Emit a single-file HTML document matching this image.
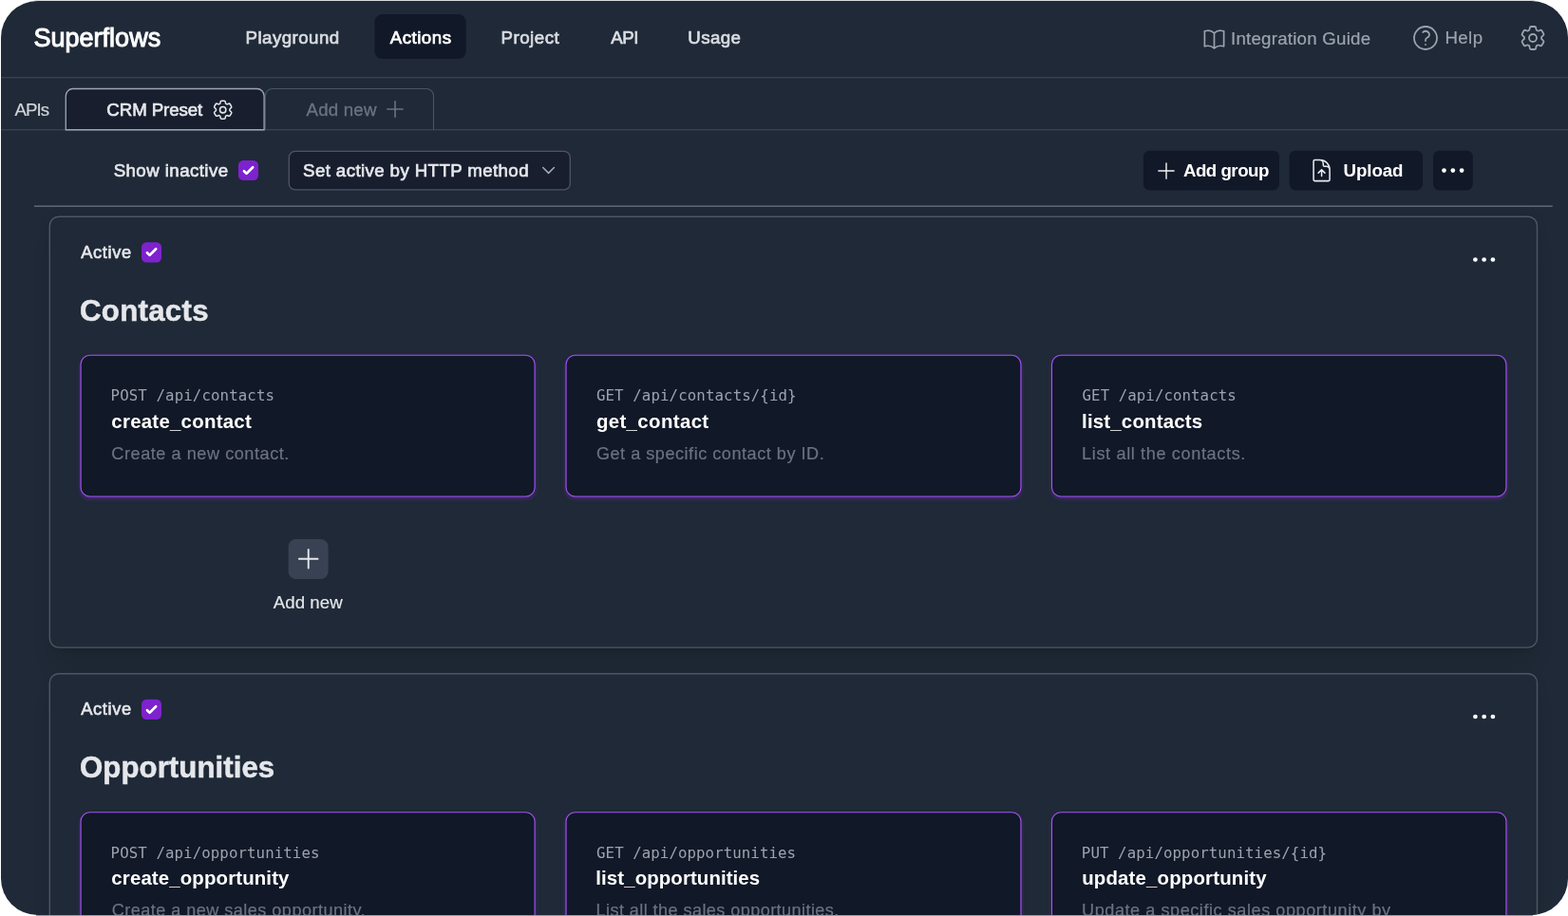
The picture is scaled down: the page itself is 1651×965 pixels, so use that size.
<!DOCTYPE html>
<html lang="en">
<head>
<meta charset="utf-8">
<title>Superflows - Actions</title>
<style>
html,body{margin:0;padding:0;background:#ffffff;}
body{width:1651px;height:965px;overflow:hidden;position:relative;font-family:"Liberation Sans",sans-serif;}
#frame{position:absolute;left:1px;top:1px;width:1650px;height:962.8px;border-radius:38.5px;overflow:hidden;background:#1f2937;}
#page{position:absolute;left:-1px;top:-1px;width:1651px;height:965px;will-change:transform;}
.t{position:absolute;white-space:nowrap;line-height:1;font-family:"Liberation Sans",sans-serif;}
.b{position:absolute;box-sizing:border-box;}
svg{position:absolute;overflow:visible;}
.gsh{position:absolute;border-radius:9.5px;background:#1f2937;box-shadow:0 20px 25px -5px rgba(0,0,0,0.11),0 8px 10px -6px rgba(0,0,0,0.11),0 0 14px rgba(0,0,0,0.07);}
.glow{position:absolute;border-radius:9.5px;box-shadow:0 2.5px 5px -0.5px rgba(147,51,234,0.42),0 0 2px rgba(147,51,234,0.25);}
</style>
</head>
<body>
<div style="position:absolute;left:36px;top:0;width:1580px;height:1px;background:#d9dadd"></div>
<div style="position:absolute;left:38px;top:964px;width:1576px;height:1px;background:#9b9ea6"></div>
<div id="frame"><div id="page">
<div class="gsh" style="left:52.3px;top:228.3px;width:1566.2px;height:453.8px;"></div>
<div class="gsh" style="left:52.3px;top:709.8px;width:1566.2px;height:420px;"></div>
<div class="glow" style="left:85.10px;top:374.3px;width:478.0px;height:148.65px;"></div>
<div class="glow" style="left:596.05px;top:374.3px;width:478.9px;height:148.65px;"></div>
<div class="glow" style="left:1107.50px;top:374.3px;width:478.4px;height:148.65px;"></div>
<div class="glow" style="left:85.10px;top:855.8px;width:478.0px;height:148.65px;"></div>
<div class="glow" style="left:596.05px;top:855.8px;width:478.9px;height:148.65px;"></div>
<div class="glow" style="left:1107.50px;top:855.8px;width:478.4px;height:148.65px;"></div>
<svg style="left:0;top:0" width="1651" height="965" viewBox="0 0 1651 965"><rect x="0" y="81" width="1651" height="1" fill="#364051"/><rect x="0" y="82" width="1651" height="1" fill="#273141"/><rect x="394.5" y="15.1" width="96.2" height="47" rx="8" fill="#111827"/><rect x="0" y="136.250" width="1651" height="1" fill="#424c5c"/><path d="M279.400 136.700V101a7.500 7.500 0 0 1 7.500-7.500h162.100a7.500 7.500 0 0 1 7.500 7.500v35.700" fill="none" stroke="#4b5563" stroke-width="1.1"/><path d="M69.300 136.750V101a7.500 7.500 0 0 1 7.500-7.500h193.800a7.500 7.500 0 0 1 7.500 7.500v35.750Z" fill="#181e2e" stroke="#9ea6b4" stroke-width="1.3"/><rect x="250.900" y="168.900" width="21.100" height="21.100" rx="5.200" fill="#7e22ce"/><rect x="304.300" y="159.300" width="296" height="40.600" rx="6.500" fill="#181e2e" stroke="#4b5563" stroke-width="1.350"/><path d="M571.700 176.500l5.850 5.900 5.850-5.900" fill="none" stroke="#a3abb8" stroke-width="1.500" stroke-linecap="round" stroke-linejoin="round"/><rect x="1204" y="158.700" width="143" height="41.800" rx="6.500" fill="#111827"/><rect x="1357.600" y="158.700" width="140.400" height="41.800" rx="6.500" fill="#111827"/><rect x="1509" y="158.700" width="41.800" height="41.800" rx="6.500" fill="#111827"/><circle cx="1520.5" cy="179.600" r="2.350" fill="#ffffff"/><circle cx="1529.8" cy="179.600" r="2.350" fill="#ffffff"/><circle cx="1539.1" cy="179.600" r="2.350" fill="#ffffff"/><rect x="36" y="216.550" width="1598.800" height="1.300" fill="#6b7280"/><rect x="52.300" y="228.300" width="1566.200" height="453.8" rx="9.500" fill="none" stroke="#4d5766" stroke-width="1.400"/><rect x="149" y="255.300" width="21.100" height="21.100" rx="5.200" fill="#7e22ce"/><circle cx="1553.4" cy="273.500" r="2.350" fill="#ffffff"/><circle cx="1562.65" cy="273.500" r="2.350" fill="#ffffff"/><circle cx="1571.9" cy="273.500" r="2.350" fill="#ffffff"/><rect x="85.100" y="374.300" width="478.0" height="148.65" rx="9.500" fill="#111827" stroke="#a453f3" stroke-width="1.120"/><rect x="596.050" y="374.300" width="478.9" height="148.65" rx="9.500" fill="#111827" stroke="#a453f3" stroke-width="1.120"/><rect x="1107.500" y="374.300" width="478.4" height="148.65" rx="9.500" fill="#111827" stroke="#a453f3" stroke-width="1.120"/><rect x="52.300" y="709.800" width="1566.200" height="420" rx="9.500" fill="none" stroke="#4d5766" stroke-width="1.400"/><rect x="149" y="736.800" width="21.100" height="21.100" rx="5.200" fill="#7e22ce"/><circle cx="1553.4" cy="755.000" r="2.350" fill="#ffffff"/><circle cx="1562.65" cy="755.000" r="2.350" fill="#ffffff"/><circle cx="1571.9" cy="755.000" r="2.350" fill="#ffffff"/><rect x="85.100" y="855.800" width="478.0" height="148.65" rx="9.500" fill="#111827" stroke="#a453f3" stroke-width="1.120"/><rect x="596.050" y="855.800" width="478.9" height="148.65" rx="9.500" fill="#111827" stroke="#a453f3" stroke-width="1.120"/><rect x="1107.500" y="855.800" width="478.4" height="148.65" rx="9.500" fill="#111827" stroke="#a453f3" stroke-width="1.120"/><rect x="303.600" y="567.900" width="42" height="42.200" rx="8" fill="#384253"/></svg>
<svg style="left:1264.70px;top:27.50px" width="27" height="27" viewBox="0 0 24 24" fill="none" stroke="#9ca3af" stroke-width="1.5" stroke-linecap="round" stroke-linejoin="round"><path d="M12 6.042A8.967 8.967 0 0 0 6 3.750c-1.052 0-2.062.18-3 .512v14.250A8.987 8.987 0 0 1 6 18c2.305 0 4.408.867 6 2.292m0-14.250a8.966 8.966 0 0 1 6-2.292c1.052 0 2.062.18 3 .512v14.250A8.987 8.987 0 0 0 18 18a8.967 8.967 0 0 0-6 2.292m0-14.250v14.250"/></svg>
<svg style="left:1484.90px;top:23.60px" width="32" height="32" viewBox="0 0 24 24" fill="none" stroke="#9ca3af" stroke-width="1.32" stroke-linecap="round" stroke-linejoin="round"><path d="M9.879 7.519c1.171-1.025 3.071-1.025 4.242 0 1.172 1.025 1.172 2.687 0 3.712-.203.179-.430.326-.670.442-.745.361-1.450.999-1.450 1.827v.750M21 12a9 9 0 1 1-18 0 9 9 0 0 1 18 0Zm-9 5.250h.008v.008H12v-.008Z"/></svg>
<svg style="left:1597.90px;top:23.70px" width="32" height="32" viewBox="0 0 24 24" fill="none" stroke="#9ca3af" stroke-width="1.32" stroke-linecap="round" stroke-linejoin="round"><path d="M9.594 3.940c.09-.542.560-.940 1.110-.940h2.593c.55 0 1.020.398 1.110.940l.213 1.281c.063.374.313.686.645.870.074.040.147.083.220.127.325.196.720.257 1.075.124l1.217-.456a1.125 1.125 0 0 1 1.370.490l1.296 2.247a1.125 1.125 0 0 1-.260 1.431l-1.003.827c-.293.241-.438.613-.430.992a7.723 7.723 0 0 1 0 .255c-.008.378.137.750.430.991l1.004.827c.424.350.534.955.260 1.430l-1.298 2.247a1.125 1.125 0 0 1-1.369.491l-1.217-.456c-.355-.133-.750-.072-1.076.124a6.470 6.470 0 0 1-.220.128c-.331.183-.581.495-.644.869l-.213 1.281c-.09.543-.560.940-1.110.940h-2.594c-.55 0-1.019-.398-1.110-.940l-.213-1.281c-.062-.374-.312-.686-.644-.870a6.520 6.520 0 0 1-.220-.127c-.325-.196-.720-.257-1.076-.124l-1.217.456a1.125 1.125 0 0 1-1.369-.490l-1.297-2.247a1.125 1.125 0 0 1 .260-1.431l1.004-.827c.292-.240.437-.613.430-.991a6.932 6.932 0 0 1 0-.255c.007-.380-.138-.751-.430-.992l-1.004-.827a1.125 1.125 0 0 1-.260-1.430l1.297-2.247a1.125 1.125 0 0 1 1.370-.491l1.216.456c.356.133.751.072 1.076-.124.072-.044.146-.086.220-.128.332-.183.582-.495.644-.869l.214-1.280Z"/><path d="M15 12a3 3 0 1 1-6 0 3 3 0 0 1 6 0Z"/></svg>
<svg style="left:222.40px;top:102.50px" width="25.4" height="25.4" viewBox="0 0 24 24" fill="none" stroke="#e5e7eb" stroke-width="1.45" stroke-linecap="round" stroke-linejoin="round"><path d="M9.594 3.940c.09-.542.560-.940 1.110-.940h2.593c.55 0 1.020.398 1.110.940l.213 1.281c.063.374.313.686.645.870.074.040.147.083.220.127.325.196.720.257 1.075.124l1.217-.456a1.125 1.125 0 0 1 1.370.490l1.296 2.247a1.125 1.125 0 0 1-.260 1.431l-1.003.827c-.293.241-.438.613-.430.992a7.723 7.723 0 0 1 0 .255c-.008.378.137.750.430.991l1.004.827c.424.350.534.955.260 1.430l-1.298 2.247a1.125 1.125 0 0 1-1.369.491l-1.217-.456c-.355-.133-.750-.072-1.076.124a6.470 6.470 0 0 1-.220.128c-.331.183-.581.495-.644.869l-.213 1.281c-.09.543-.560.940-1.110.940h-2.594c-.55 0-1.019-.398-1.110-.940l-.213-1.281c-.062-.374-.312-.686-.644-.870a6.520 6.520 0 0 1-.220-.127c-.325-.196-.720-.257-1.076-.124l-1.217.456a1.125 1.125 0 0 1-1.369-.490l-1.297-2.247a1.125 1.125 0 0 1 .260-1.431l1.004-.827c.292-.240.437-.613.430-.991a6.932 6.932 0 0 1 0-.255c.007-.380-.138-.751-.430-.992l-1.004-.827a1.125 1.125 0 0 1-.260-1.430l1.297-2.247a1.125 1.125 0 0 1 1.370-.491l1.216.456c.356.133.751.072 1.076-.124.072-.044.146-.086.220-.128.332-.183.582-.495.644-.869l.214-1.280Z"/><path d="M15 12a3 3 0 1 1-6 0 3 3 0 0 1 6 0Z"/></svg>
<svg style="left:403.00px;top:102.10px" width="26" height="26" viewBox="0 0 24 24" fill="none" stroke="#6b7280" stroke-width="1.5" stroke-linecap="round" ><path d="M12 4.500v15m7.500-7.500h-15"/></svg>
<svg style="left:1214.50px;top:166.75px" width="26" height="26" viewBox="0 0 24 24" fill="none" stroke="#f3f4f6" stroke-width="1.3" stroke-linecap="round" ><path d="M12 4.500v15m7.500-7.500h-15"/></svg>
<svg style="left:1378.10px;top:165.90px" width="27.2" height="27.2" viewBox="0 0 24 24" fill="none" stroke="#e9ebef" stroke-width="1.35" stroke-linecap="round" stroke-linejoin="round"><path d="M19.500 14.250v-2.625a3.375 3.375 0 0 0-3.375-3.375h-1.500A1.125 1.125 0 0 1 13.500 7.125v-1.500a3.375 3.375 0 0 0-3.375-3.375H8.250m6.750 12-3-3m0 0-3 3m3-3v6m-1.500-15H5.625c-.621 0-1.125.504-1.125 1.125v17.250c0 .621.504 1.125 1.125 1.125h12.750c.621 0 1.125-.504 1.125-1.125V11.250a9 9 0 0 0-9-9Z"/></svg>
<svg style="left:308.75px;top:573.25px" width="31.5" height="31.5" viewBox="0 0 24 24" fill="none" stroke="#e5e7eb" stroke-width="1.45" stroke-linecap="round" ><path d="M12 4.500v15m7.500-7.500h-15"/></svg>
<svg style="left:250.9px;top:168.9px" width="21.1" height="21.1" viewBox="0 0 16 16" fill="#fff"><path d="M12.207 4.793a1 1 0 0 1 0 1.414l-5 5a1 1 0 0 1-1.414 0l-2-2a1 1 0 0 1 1.414-1.414L6.500 9.086l4.293-4.293a1 1 0 0 1 1.414 0z"/></svg>
<svg style="left:149px;top:255.3px" width="21.1" height="21.1" viewBox="0 0 16 16" fill="#fff"><path d="M12.207 4.793a1 1 0 0 1 0 1.414l-5 5a1 1 0 0 1-1.414 0l-2-2a1 1 0 0 1 1.414-1.414L6.500 9.086l4.293-4.293a1 1 0 0 1 1.414 0z"/></svg>
<svg style="left:149px;top:736.8px" width="21.1" height="21.1" viewBox="0 0 16 16" fill="#fff"><path d="M12.207 4.793a1 1 0 0 1 0 1.414l-5 5a1 1 0 0 1-1.414 0l-2-2a1 1 0 0 1 1.414-1.414L6.500 9.086l4.293-4.293a1 1 0 0 1 1.414 0z"/></svg>

<div class="t" style='left:35.49px;top:27.00px;font-size:27px;color:#ffffff;letter-spacing:0.012px;-webkit-text-stroke:1.0px #ffffff;'>Superflows</div>
<div class="t" style='left:258.54px;top:31.00px;font-size:18.7px;color:#d9dce2;letter-spacing:0.455px;-webkit-text-stroke:0.7px #d9dce2;'>Playground</div>
<div class="t" style='left:410.67px;top:31.00px;font-size:18.7px;color:#ffffff;letter-spacing:0.514px;-webkit-text-stroke:0.7px #ffffff;'>Actions</div>
<div class="t" style='left:527.53px;top:31.00px;font-size:18.7px;color:#d9dce2;letter-spacing:0.497px;-webkit-text-stroke:0.7px #d9dce2;'>Project</div>
<div class="t" style='left:643.21px;top:31.00px;font-size:18.7px;color:#d9dce2;letter-spacing:-0.414px;-webkit-text-stroke:0.7px #d9dce2;'>API</div>
<div class="t" style='left:724.31px;top:31.00px;font-size:18.7px;color:#d9dce2;letter-spacing:0.405px;-webkit-text-stroke:0.7px #d9dce2;'>Usage</div>
<div class="t" style='left:1295.98px;top:32.00px;font-size:18.7px;color:#9ca3af;letter-spacing:0.234px;-webkit-text-stroke:0.2px #9ca3af;'>Integration Guide</div>
<div class="t" style='left:1521.38px;top:31.00px;font-size:18.7px;color:#9ca3af;letter-spacing:0.406px;-webkit-text-stroke:0.2px #9ca3af;'>Help</div>
<div class="t" style='left:15.50px;top:107.00px;font-size:18.7px;color:#d1d5db;letter-spacing:-0.943px;-webkit-text-stroke:0.2px #d1d5db;'>APIs</div>
<div class="t" style='left:112.36px;top:107.00px;font-size:18.7px;color:#e5e7eb;letter-spacing:-0.091px;-webkit-text-stroke:0.65px #e5e7eb;'>CRM Preset</div>
<div class="t" style='left:322.55px;top:107.00px;font-size:18.7px;color:#6b7280;letter-spacing:0.189px;-webkit-text-stroke:0.35px #6b7280;'>Add new</div>
<div class="t" style='left:119.67px;top:171.00px;font-size:18.7px;color:#e5e7eb;letter-spacing:0.428px;-webkit-text-stroke:0.65px #e5e7eb;'>Show inactive</div>
<div class="t" style='left:319.08px;top:171.00px;font-size:18.7px;color:#e5e7eb;letter-spacing:0.388px;-webkit-text-stroke:0.65px #e5e7eb;'>Set active by HTTP method</div>
<div class="t" style='left:1245.97px;top:171.00px;font-size:18.7px;color:#ffffff;letter-spacing:-0.506px;font-weight:700;'>Add group</div>
<div class="t" style='left:1414.50px;top:171.00px;font-size:18.7px;color:#ffffff;letter-spacing:-0.059px;font-weight:700;'>Upload</div>
<div class="t" style='left:85.14px;top:257.00px;font-size:18.3px;color:#e5e7eb;letter-spacing:0.675px;-webkit-text-stroke:0.6px #e5e7eb;'>Active</div>
<div class="t" style='left:83.96px;top:312.00px;font-size:31.2px;color:#e5e7eb;letter-spacing:0.305px;font-weight:700;-webkit-text-stroke:0.5px #e5e7eb;'>Contacts</div>
<div class="t" style='left:116.62px;top:409.00px;font-size:15.75px;color:#9ca3af;letter-spacing:0.101px;font-family:"DejaVu Sans Mono", "Liberation Mono", monospace;'>POST /api/contacts</div>
<div class="t" style='left:117.35px;top:434.00px;font-size:20.4px;color:#ffffff;letter-spacing:0.263px;font-weight:700;'>create_contact</div>
<div class="t" style='left:117.33px;top:469.00px;font-size:18.1px;color:#6b7280;letter-spacing:0.551px;-webkit-text-stroke:0.2px #6b7280;'>Create a new contact.</div>
<div class="t" style='left:627.91px;top:409.00px;font-size:15.75px;color:#9ca3af;letter-spacing:0.099px;font-family:"DejaVu Sans Mono", "Liberation Mono", monospace;'>GET /api/contacts/{id}</div>
<div class="t" style='left:627.89px;top:434.00px;font-size:20.4px;color:#ffffff;letter-spacing:0.385px;font-weight:700;'>get_contact</div>
<div class="t" style='left:627.90px;top:469.00px;font-size:18.1px;color:#6b7280;letter-spacing:0.518px;-webkit-text-stroke:0.2px #6b7280;'>Get a specific contact by ID.</div>
<div class="t" style='left:1139.57px;top:409.00px;font-size:15.75px;color:#9ca3af;letter-spacing:0.058px;font-family:"DejaVu Sans Mono", "Liberation Mono", monospace;'>GET /api/contacts</div>
<div class="t" style='left:1139.12px;top:434.00px;font-size:20.4px;color:#ffffff;letter-spacing:0.190px;font-weight:700;'>list_contacts</div>
<div class="t" style='left:1139.06px;top:469.00px;font-size:18.1px;color:#6b7280;letter-spacing:0.640px;-webkit-text-stroke:0.2px #6b7280;'>List all the contacts.</div>
<div class="t" style='left:287.86px;top:626.00px;font-size:18.7px;color:#e5e7eb;letter-spacing:0.018px;-webkit-text-stroke:0.15px #e5e7eb;'>Add new</div>
<div class="t" style='left:85.14px;top:738.00px;font-size:18.3px;color:#e5e7eb;letter-spacing:0.675px;-webkit-text-stroke:0.6px #e5e7eb;'>Active</div>
<div class="t" style='left:83.98px;top:793.00px;font-size:31.2px;color:#e5e7eb;letter-spacing:0.067px;font-weight:700;-webkit-text-stroke:0.5px #e5e7eb;'>Opportunities</div>
<div class="t" style='left:116.62px;top:891.00px;font-size:15.75px;color:#9ca3af;letter-spacing:0.079px;font-family:"DejaVu Sans Mono", "Liberation Mono", monospace;'>POST /api/opportunities</div>
<div class="t" style='left:117.35px;top:915.00px;font-size:20.4px;color:#ffffff;letter-spacing:0.143px;font-weight:700;'>create_opportunity</div>
<div class="t" style='left:117.75px;top:950.00px;font-size:18.1px;color:#6b7280;letter-spacing:0.457px;-webkit-text-stroke:0.2px #6b7280;'>Create a new sales opportunity.</div>
<div class="t" style='left:628.06px;top:891.00px;font-size:15.75px;color:#9ca3af;letter-spacing:0.064px;font-family:"DejaVu Sans Mono", "Liberation Mono", monospace;'>GET /api/opportunities</div>
<div class="t" style='left:627.34px;top:915.00px;font-size:20.4px;color:#ffffff;letter-spacing:0.104px;font-weight:700;'>list_opportunities</div>
<div class="t" style='left:627.55px;top:950.00px;font-size:18.1px;color:#6b7280;letter-spacing:0.417px;-webkit-text-stroke:0.2px #6b7280;'>List all the sales opportunities.</div>
<div class="t" style='left:1138.87px;top:891.00px;font-size:15.75px;color:#9ca3af;letter-spacing:0.083px;font-family:"DejaVu Sans Mono", "Liberation Mono", monospace;'>PUT /api/opportunities/{id}</div>
<div class="t" style='left:1139.25px;top:915.00px;font-size:20.4px;color:#ffffff;letter-spacing:0.167px;font-weight:700;'>update_opportunity</div>
<div class="t" style='left:1139.05px;top:950.00px;font-size:18.1px;color:#6b7280;letter-spacing:0.549px;-webkit-text-stroke:0.2px #6b7280;'>Update a specific sales opportunity by</div>
</div></div>
</body>
</html>
